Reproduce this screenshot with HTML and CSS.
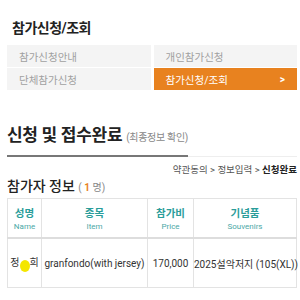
FILE: index.html
```html
<!DOCTYPE html>
<html lang="ko">
<head>
  <meta charset="UTF-8" />
  <title>참가신청/조회</title>
  <link rel="stylesheet" href="styles.css">
</head>
<body>
  <h2 class="page-title">참가신청/조회</h2>

  <div class="menu">
    <a class="menu-item">참가신청안내</a>
    <a class="menu-item">개인참가신청</a>
    <a class="menu-item">단체참가신청</a>
    <a class="menu-item active">참가신청/조회 <span class="arrow">&gt;</span></a>
  </div>

  <div class="done-head">
    <h3>신청 및 접수완료 <small>(최종정보 확인)</small></h3>
  </div>
  <div class="steps">약관동의 &gt; 정보입력 &gt; <b>신청완료</b></div>

  <h4 class="sub-title">참가자 정보 <small>( <em>1</em> 명)</small></h4>

  <table class="info">
    <thead>
      <tr>
        <th class="c-name">성명<span>Name</span></th>
        <th class="c-item">종목<span>Item</span></th>
        <th class="c-price">참가비<span>Price</span></th>
        <th>기념품<span>Souvenirs</span></th>
      </tr>
    </thead>
    <tbody>
      <tr>
        <td>정<span class="blot"></span>희</td>
        <td>granfondo(with jersey)</td>
        <td>170,000</td>
        <td>2025설악저지 (105(XL))</td>
      </tr>
    </tbody>
  </table>
</body>
</html>
```

FILE: styles.css
```css
body {
  margin: 0;
  padding: 0 3px 0 7px;
  background: #fff;
  color: #333;
  font-family: Roboto, "Noto Sans CJK KR", sans-serif;
}
.page-title {
  margin: 0;
  padding: 17px 0 0 5px;
  height: 28px;
  font-size: 14px;
  font-weight: 700;
  color: #222;
  letter-spacing: -0.5px;
}
.menu {
  display: grid;
  grid-template-columns: 1fr 1fr;
  column-gap: 3px;
  row-gap: 1px;
}
.menu-item {
  display: flex;
  align-items: center;
  height: 22px;
  padding: 0 12px;
  background: #f4f4f4;
  color: #a0a0a0;
  font-size: 10.5px;
}
.menu-item.active {
  background: #e8821f;
  color: #fff;
  justify-content: space-between;
}
.arrow {
  font-size: 10px;
  font-weight: 700;
}
.done-head {
  margin-top: 34px;
  border-bottom: 1px solid #eee;
}
.done-head h3 {
  display: inline-block;
  margin: 0 0 -1px;
  padding-bottom: 6px;
  border-bottom: 2px solid #777;
  font-size: 17px;
  line-height: 22px;
  font-weight: 700;
  color: #222;
  letter-spacing: -0.3px;
}
.done-head small {
  font-size: 10px;
  font-weight: 400;
  color: #888;
}
.steps {
  margin-top: 6px;
  text-align: right;
  font-size: 9.5px;
  line-height: 13px;
  color: #555;
}
.steps b {
  color: #222;
}
.sub-title {
  margin: 1px 0 1px;
  font-size: 14px;
  line-height: 18px;
  font-weight: 500;
  color: #222;
}
.sub-title small {
  font-size: 10px;
  color: #888;
  font-weight: 400;
}
.sub-title em {
  font-style: normal;
  font-weight: 700;
  color: #e8821f;
}
.info {
  width: 100%;
  border-collapse: collapse;
  table-layout: fixed;
  font-size: 10px;
}
.info th, .info td {
  border: 1px solid #e3e3e3;
  text-align: center;
  white-space: nowrap;
  padding: 0;
}
.info th {
  height: 38px;
  border-bottom: 2px solid #ddd;
  color: #2a9d9a;
  font-size: 10.5px;
  font-weight: 700;
}
.info th span {
  display: block;
  margin-top: 2px;
  font-size: 8px;
  font-weight: 400;
  color: #4ba8a6;
}
.info td {
  height: 48px;
  color: #333;
}
.c-name { width: 33px; }
.c-item { width: 105px; }
.c-price { width: 45px; }
.blot {
  display: inline-block;
  width: 10px;
  height: 12px;
  margin-top: 4px;
  border-radius: 50%;
  background: #f4e600;
  vertical-align: middle;
}
```
